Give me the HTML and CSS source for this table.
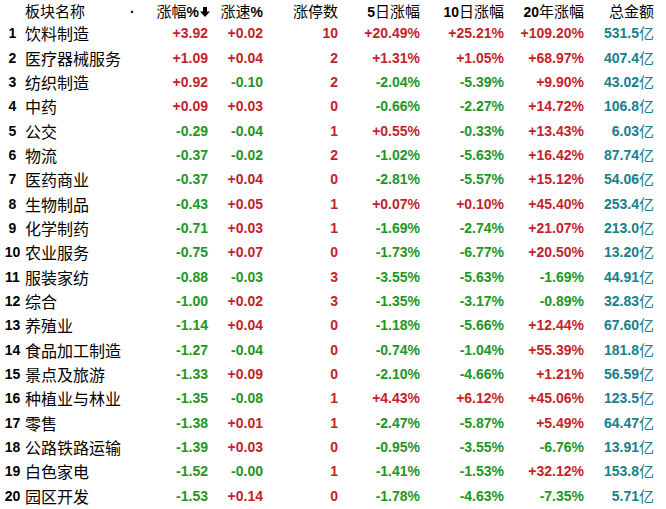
FILE: index.html
```html
<!DOCTYPE html>
<html lang="zh">
<head>
<meta charset="utf-8">
<link rel="stylesheet" href="styles.css">
</head>
<body>
<div class="board">
  <div class="row head">
    <div class="idx"></div>
    <div class="name hname"><span>板块名称</span><span class="dot">.</span></div>
    <div class="num">涨幅<b>%</b><svg class="arrow" width="10" height="10" viewBox="0 0 10 10"><polygon points="3,0 7,0 7,4.5 10,4.5 5,10 0,4.5 3,4.5" fill="#000"/></svg></div>
    <div class="num">涨速<b>%</b></div>
    <div class="num">涨停数</div>
    <div class="num"><b>5</b>日涨幅</div>
    <div class="num"><b>10</b>日涨幅</div>
    <div class="num"><b>20</b>年涨幅</div>
    <div class="num">总金额</div>
  </div>
  <div class="row"><div class="idx">1</div><div class="name">饮料制造</div><div class="num v r p1">+3.92</div><div class="num v r">+0.02</div><div class="num v r">10</div><div class="num v r">+20.49%</div><div class="num v r">+25.21%</div><div class="num v r">+109.20%</div><div class="num v t">531.5<span class="yi">亿</span></div></div>
  <div class="row"><div class="idx">2</div><div class="name">医疗器械服务</div><div class="num v r p1">+1.09</div><div class="num v r">+0.04</div><div class="num v r">2</div><div class="num v r">+1.31%</div><div class="num v r">+1.05%</div><div class="num v r">+68.97%</div><div class="num v t">407.4<span class="yi">亿</span></div></div>
  <div class="row"><div class="idx">3</div><div class="name">纺织制造</div><div class="num v r p1">+0.92</div><div class="num v g">-0.10</div><div class="num v r">2</div><div class="num v g">-2.04%</div><div class="num v g">-5.39%</div><div class="num v r">+9.90%</div><div class="num v t">43.02<span class="yi">亿</span></div></div>
  <div class="row"><div class="idx">4</div><div class="name">中药</div><div class="num v r p1">+0.09</div><div class="num v r">+0.03</div><div class="num v r">0</div><div class="num v g">-0.66%</div><div class="num v g">-2.27%</div><div class="num v r">+14.72%</div><div class="num v t">106.8<span class="yi">亿</span></div></div>
  <div class="row"><div class="idx">5</div><div class="name">公交</div><div class="num v g p1">-0.29</div><div class="num v g">-0.04</div><div class="num v r">1</div><div class="num v r">+0.55%</div><div class="num v g">-0.33%</div><div class="num v r">+13.43%</div><div class="num v t">6.03<span class="yi">亿</span></div></div>
  <div class="row"><div class="idx">6</div><div class="name">物流</div><div class="num v g p1">-0.37</div><div class="num v g">-0.02</div><div class="num v r">2</div><div class="num v g">-1.02%</div><div class="num v g">-5.63%</div><div class="num v r">+16.42%</div><div class="num v t">87.74<span class="yi">亿</span></div></div>
  <div class="row"><div class="idx">7</div><div class="name">医药商业</div><div class="num v g p1">-0.37</div><div class="num v r">+0.04</div><div class="num v r">0</div><div class="num v g">-2.81%</div><div class="num v g">-5.57%</div><div class="num v r">+15.12%</div><div class="num v t">54.06<span class="yi">亿</span></div></div>
  <div class="row"><div class="idx">8</div><div class="name">生物制品</div><div class="num v g p1">-0.43</div><div class="num v r">+0.05</div><div class="num v r">1</div><div class="num v r">+0.07%</div><div class="num v r">+0.10%</div><div class="num v r">+45.40%</div><div class="num v t">253.4<span class="yi">亿</span></div></div>
  <div class="row"><div class="idx">9</div><div class="name">化学制药</div><div class="num v g p1">-0.71</div><div class="num v r">+0.03</div><div class="num v r">1</div><div class="num v g">-1.69%</div><div class="num v g">-2.74%</div><div class="num v r">+21.07%</div><div class="num v t">213.0<span class="yi">亿</span></div></div>
  <div class="row"><div class="idx">10</div><div class="name">农业服务</div><div class="num v g p1">-0.75</div><div class="num v r">+0.07</div><div class="num v r">0</div><div class="num v g">-1.73%</div><div class="num v g">-6.77%</div><div class="num v r">+20.50%</div><div class="num v t">13.20<span class="yi">亿</span></div></div>
  <div class="row"><div class="idx">11</div><div class="name">服装家纺</div><div class="num v g p1">-0.88</div><div class="num v g">-0.03</div><div class="num v r">3</div><div class="num v g">-3.55%</div><div class="num v g">-5.63%</div><div class="num v g">-1.69%</div><div class="num v t">44.91<span class="yi">亿</span></div></div>
  <div class="row"><div class="idx">12</div><div class="name">综合</div><div class="num v g p1">-1.00</div><div class="num v r">+0.02</div><div class="num v r">3</div><div class="num v g">-1.35%</div><div class="num v g">-3.17%</div><div class="num v g">-0.89%</div><div class="num v t">32.83<span class="yi">亿</span></div></div>
  <div class="row"><div class="idx">13</div><div class="name">养殖业</div><div class="num v g p1">-1.14</div><div class="num v r">+0.04</div><div class="num v r">0</div><div class="num v g">-1.18%</div><div class="num v g">-5.66%</div><div class="num v r">+12.44%</div><div class="num v t">67.60<span class="yi">亿</span></div></div>
  <div class="row"><div class="idx">14</div><div class="name">食品加工制造</div><div class="num v g p1">-1.27</div><div class="num v g">-0.04</div><div class="num v r">0</div><div class="num v g">-0.74%</div><div class="num v g">-1.04%</div><div class="num v r">+55.39%</div><div class="num v t">181.8<span class="yi">亿</span></div></div>
  <div class="row"><div class="idx">15</div><div class="name">景点及旅游</div><div class="num v g p1">-1.33</div><div class="num v r">+0.09</div><div class="num v r">0</div><div class="num v g">-2.10%</div><div class="num v g">-4.66%</div><div class="num v r">+1.21%</div><div class="num v t">56.59<span class="yi">亿</span></div></div>
  <div class="row"><div class="idx">16</div><div class="name">种植业与林业</div><div class="num v g p1">-1.35</div><div class="num v g">-0.08</div><div class="num v r">1</div><div class="num v r">+4.43%</div><div class="num v r">+6.12%</div><div class="num v r">+45.06%</div><div class="num v t">123.5<span class="yi">亿</span></div></div>
  <div class="row"><div class="idx">17</div><div class="name">零售</div><div class="num v g p1">-1.38</div><div class="num v r">+0.01</div><div class="num v r">1</div><div class="num v g">-2.47%</div><div class="num v g">-5.87%</div><div class="num v r">+5.49%</div><div class="num v t">64.47<span class="yi">亿</span></div></div>
  <div class="row"><div class="idx">18</div><div class="name">公路铁路运输</div><div class="num v g p1">-1.39</div><div class="num v r">+0.03</div><div class="num v r">0</div><div class="num v g">-0.95%</div><div class="num v g">-3.55%</div><div class="num v g">-6.76%</div><div class="num v t">13.91<span class="yi">亿</span></div></div>
  <div class="row"><div class="idx">19</div><div class="name">白色家电</div><div class="num v g p1">-1.52</div><div class="num v g">-0.00</div><div class="num v r">1</div><div class="num v g">-1.41%</div><div class="num v g">-1.53%</div><div class="num v r">+32.12%</div><div class="num v t">153.8<span class="yi">亿</span></div></div>
  <div class="row"><div class="idx">20</div><div class="name">园区开发</div><div class="num v g p1">-1.53</div><div class="num v r">+0.14</div><div class="num v r">0</div><div class="num v g">-1.78%</div><div class="num v g">-4.63%</div><div class="num v g">-7.35%</div><div class="num v t">5.71<span class="yi">亿</span></div></div>
</div>
</body>
</html>
```

FILE: styles.css
```css
html, body {
  margin: 0;
  padding: 0;
  background: #ffffff;
}
.board {
  width: 666px;
  font-family: "Noto Sans CJK SC", "Liberation Sans", sans-serif;
  font-size: 16px;
  color: #000;
}
.row {
  display: grid;
  grid-template-columns: 25px 109px 76px 53px 75px 82px 84px 80px 70px;
  height: 24.35px;
  align-items: center;
}
.row.head {
  height: 21px;
  align-items: start;
  font-size: 15px;
}
.row.head > div {
  line-height: normal;
}
.idx {
  text-align: center;
  font-family: "Liberation Sans", Arial, sans-serif;
  font-weight: bold;
  font-size: 14px;
  line-height: 20px;
}
.name {
  white-space: nowrap;
  line-height: 20px;
}
.hname {
  display: flex;
  justify-content: space-between;
}
.dot {
  font-family: "Liberation Sans", Arial, sans-serif;
  font-weight: bold;
  font-size: 14px;
}
.num {
  text-align: right;
  white-space: nowrap;
  line-height: 20px;
}
.num b {
  font-family: "Liberation Sans", Arial, sans-serif;
  font-weight: bold;
  font-size: 14px;
}
.arrow {
  display: inline-block;
  vertical-align: 0;
  margin-left: 1px;
}
.v {
  font-family: "Liberation Sans", Arial, sans-serif;
  font-weight: bold;
  font-size: 14px;
}
.p1 {
  padding-right: 2px;
}
.r { color: #c41f2c; }
.g { color: #1f961f; }
.t { color: #16808c; }
.yi {
  vertical-align: -1px;
  font-family: "Noto Sans CJK SC", sans-serif;
  font-weight: normal;
  font-size: 15px;
}
```
